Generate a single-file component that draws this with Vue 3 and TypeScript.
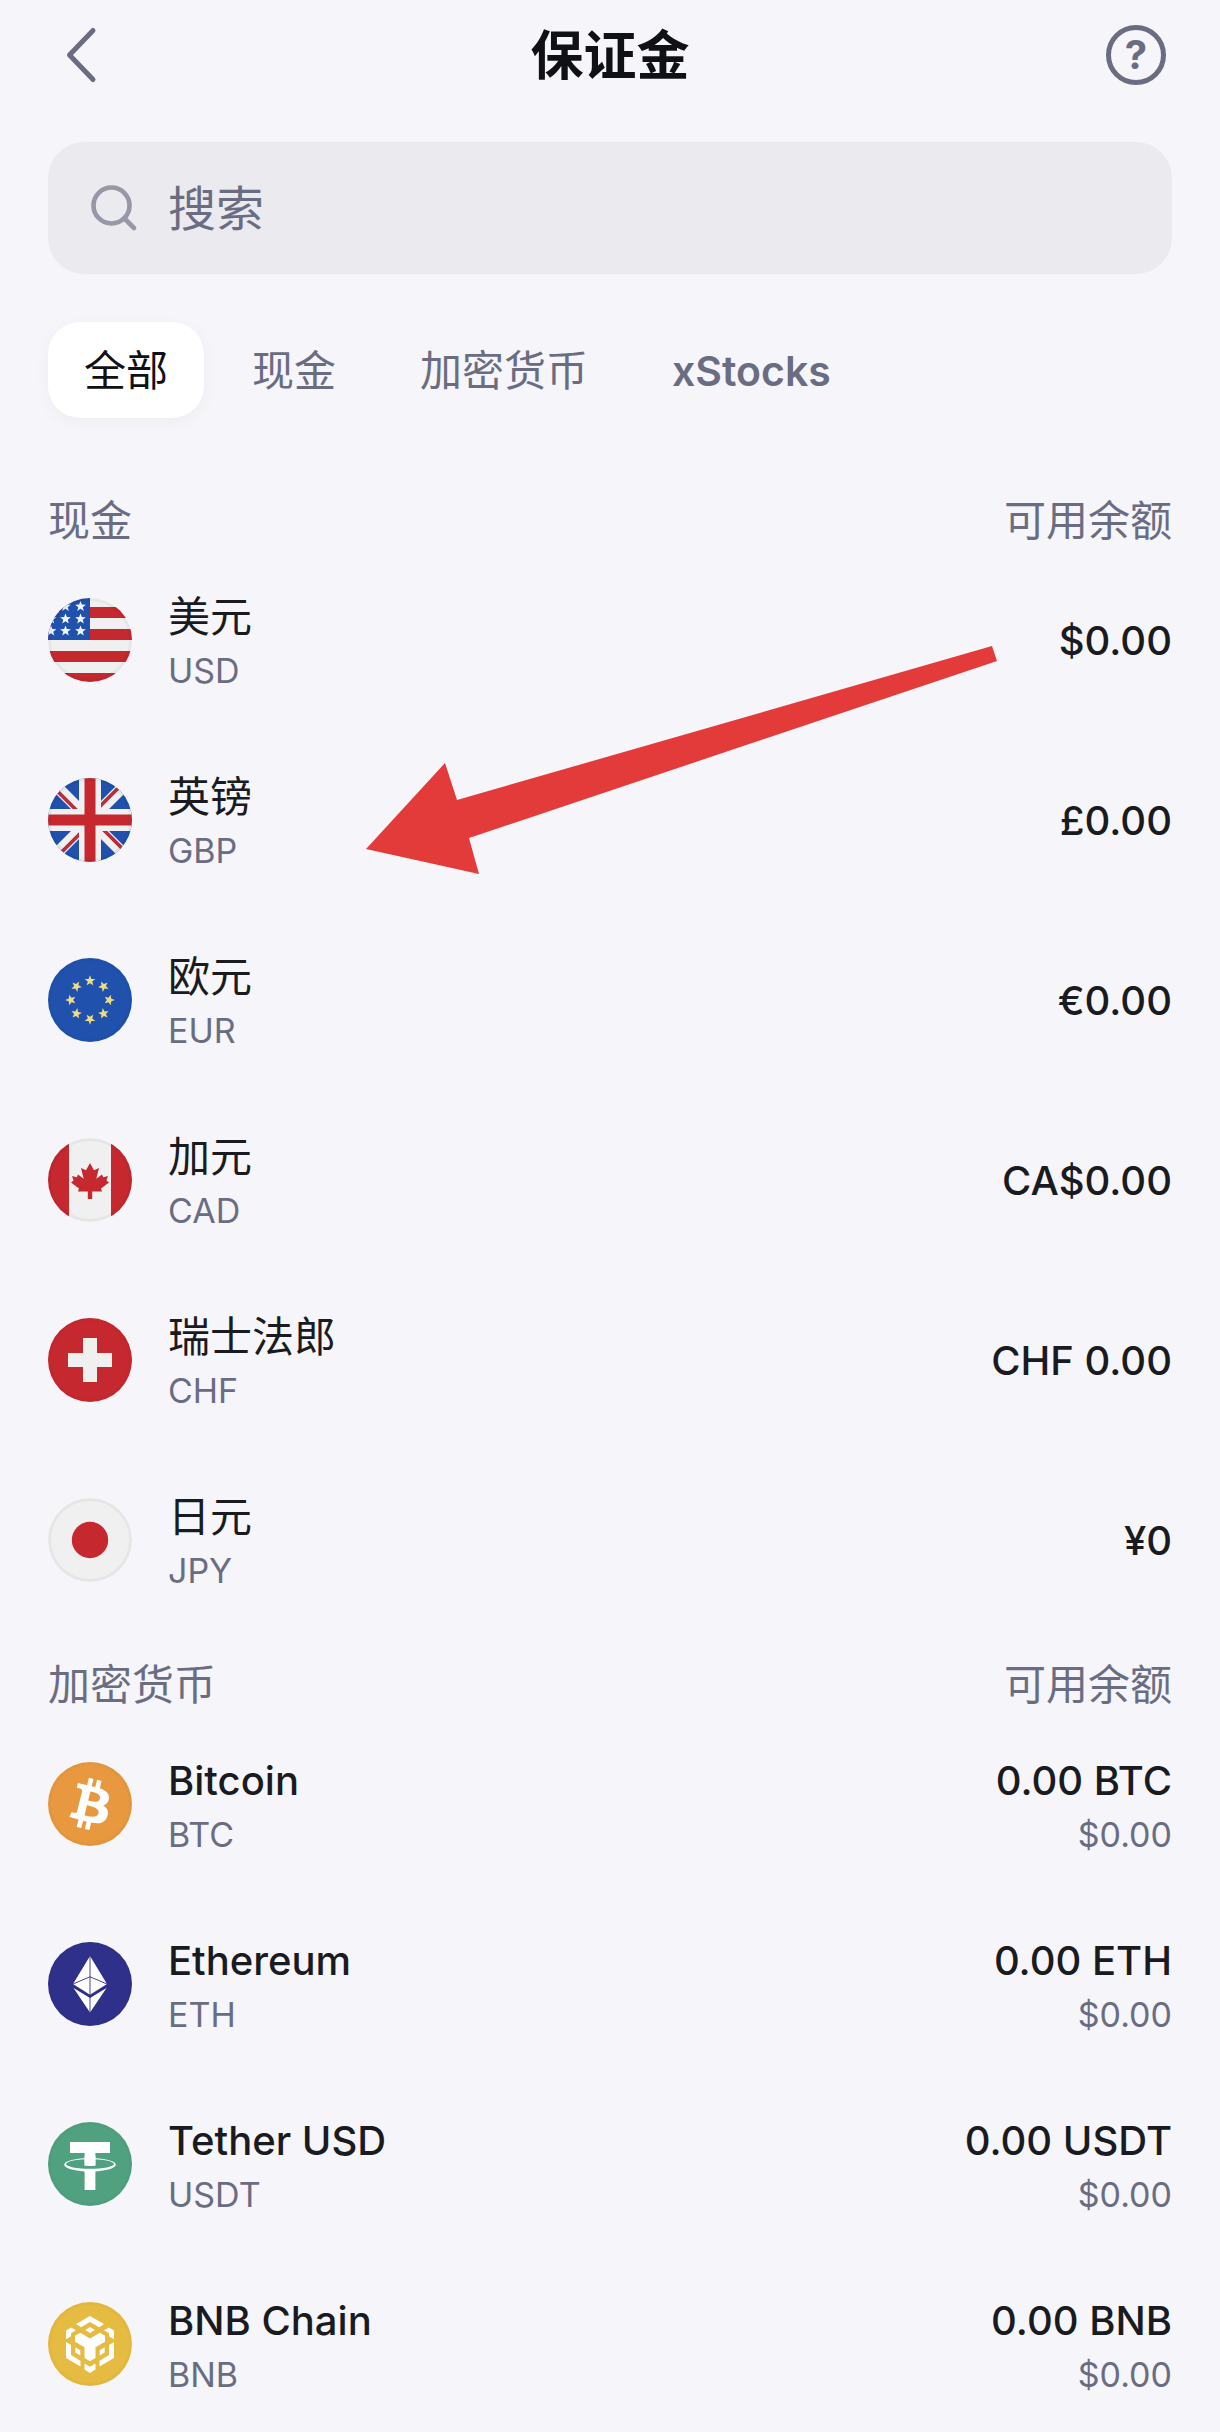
<script setup lang="ts">
import { ref, computed } from 'vue'

interface Asset {
  code: string
  name: string
  amount: string
  value?: string
}

interface Group {
  id: string
  title: string
  assets: Asset[]
}

const tabs = [
  { id: 'all', label: '全部' },
  { id: 'cash', label: '现金' },
  { id: 'crypto', label: '加密货币' },
  { id: 'xstocks', label: 'xStocks' },
]

const activeTab = ref('all')
const query = ref('')

const groups: Group[] = [
  {
    id: 'cash',
    title: '现金',
    assets: [
      { code: 'USD', name: '美元', amount: '$0.00' },
      { code: 'GBP', name: '英镑', amount: '£0.00' },
      { code: 'EUR', name: '欧元', amount: '€0.00' },
      { code: 'CAD', name: '加元', amount: 'CA$0.00' },
      { code: 'CHF', name: '瑞士法郎', amount: 'CHF 0.00' },
      { code: 'JPY', name: '日元', amount: '¥0' },
    ],
  },
  {
    id: 'crypto',
    title: '加密货币',
    assets: [
      { code: 'BTC', name: 'Bitcoin', amount: '0.00 BTC', value: '$0.00' },
      { code: 'ETH', name: 'Ethereum', amount: '0.00 ETH', value: '$0.00' },
      { code: 'USDT', name: 'Tether USD', amount: '0.00 USDT', value: '$0.00' },
      { code: 'BNB', name: 'BNB Chain', amount: '0.00 BNB', value: '$0.00' },
    ],
  },
]

const visibleGroups = computed(() => {
  const q = query.value.trim().toLowerCase()
  return groups
    .filter((g) => activeTab.value === 'all' || g.id === activeTab.value)
    .map((g) => ({
      ...g,
      assets: g.assets.filter((a) => (a.name + a.code).toLowerCase().includes(q)),
    }))
})

function starPoints(cx: number, cy: number, r: number): string {
  const points: string[] = []
  for (let i = 0; i < 10; i++) {
    const radius = i % 2 === 0 ? r : r * 0.42
    const a = (Math.PI / 5) * i - Math.PI / 2
    points.push(`${(cx + radius * Math.cos(a)).toFixed(2)},${(cy + radius * Math.sin(a)).toFixed(2)}`)
  }
  return points.join(' ')
}

const usStars = [8.5, 21, 33].flatMap((y) => [3, 17.5, 32.5].map((x) => starPoints(x, y, 5.6)))
const euStar = starPoints(42, 22.8, 5.6)
const euAngles = [0, 45, 90, 135, 180, 225, 270, 315]
const lightEdge = ['USD', 'GBP', 'CAD', 'JPY']
</script>

<template>
  <div class="page">
    <header class="topbar">
      <button class="back" type="button" aria-label="返回">
        <svg width="36" height="60" viewBox="0 0 36 60" aria-hidden="true">
          <path d="M31 5.500 7.500 30 31 54.500" fill="none" stroke="currentColor" stroke-width="5" stroke-linecap="round" stroke-linejoin="round" />
        </svg>
      </button>
      <h1>保证金</h1>
      <button class="help" type="button" aria-label="帮助">?</button>
    </header>

    <label class="search">
      <svg width="48" height="48" viewBox="0 0 48 48" aria-hidden="true">
        <g fill="none" stroke="currentColor" stroke-width="4.600" stroke-linecap="round">
          <circle cx="21.500" cy="21.500" r="18" />
          <path d="M34.500 34.500 44 44" />
        </g>
      </svg>
      <input v-model="query" type="text" placeholder="搜索" aria-label="搜索" />
    </label>

    <nav class="tabs">
      <button
        v-for="tab in tabs"
        :key="tab.id"
        type="button"
        class="tab"
        :class="{ active: tab.id === activeTab, latin: tab.id === 'xstocks' }"
        @click="activeTab = tab.id"
      >
        {{ tab.label }}
      </button>
    </nav>

    <main>
      <section v-for="group in visibleGroups" :key="group.id" class="group" :class="group.id">
        <div class="group-head">
          <h2>{{ group.title }}</h2>
          <span>可用余额</span>
        </div>
        <ul>
          <li v-for="asset in group.assets" :key="asset.code" class="row">
            <svg class="icon" viewBox="0 0 84 84" aria-hidden="true">
              <template v-if="asset.code === 'USD'">
                <rect width="84" height="84" fill="#f0f0f0" />
                <path d="M0 9h84v11H0zM0 31h84v11H0zM0 53h84v11H0zM0 75h84v9H0z" fill="#c6282f" />
                <rect width="42" height="42" fill="#1f51ad" />
                <polygon v-for="(s, i) in usStars" :key="i" :points="s" fill="#f0f4fb" />
              </template>

              <template v-else-if="asset.code === 'GBP'">
                <rect width="84" height="84" fill="#1f51ad" />
                <path d="M0 0 84 84M84 0 0 84" stroke="#f0f0f0" stroke-width="11.400" />
                <path d="M5 8.700 36 39.700M79 75.300 48 44.300M75.300 5 44.300 36M8.700 79 39.700 48" stroke="#b52f3d" stroke-width="3.600" />
                <path d="M31 0h22v31h31v22H53v31H31V53H0V31h31z" fill="#f0f0f0" />
                <path d="M36.500 0h11v36.500H84v11H47.500V84h-11V47.500H0v-11h36.500z" fill="#c6282f" />
              </template>

              <template v-else-if="asset.code === 'EUR'">
                <rect width="84" height="84" fill="#1f51ad" />
                <polygon v-for="a in euAngles" :key="a" :points="euStar" :transform="`rotate(${a} 42 42)`" fill="#efdc80" />
              </template>

              <template v-else-if="asset.code === 'CAD'">
                <rect width="84" height="84" fill="#f0f0f0" />
                <path d="M0 0h21v84H0zM63 0h21v84H63z" fill="#c6282f" />
                <path d="M42 25 46 32.200 51 30 48.300 40.800 54 36.500 55.300 39.300 60 38 58.500 42.500 61 44.500 53 50.500 54 53.500H44.200V61H39.800V53.500H30L31 50.500 23 44.500 25.500 42.500 24 38 28.700 39.300 30 36.500 35.700 40.800 33 30 38 32.200Z" fill="#c6282f" />
              </template>

              <template v-else-if="asset.code === 'CHF'">
                <rect width="84" height="84" fill="#c6282f" />
                <path d="M35 20h14v15h15v14H49v15H35V49H20V35h15z" fill="#f0f0f0" />
              </template>

              <template v-else-if="asset.code === 'JPY'">
                <rect width="84" height="84" fill="#f0f0f0" />
                <circle cx="42" cy="42" r="18.200" fill="#c6282f" />
              </template>

              <template v-else-if="asset.code === 'BTC'">
                <rect width="84" height="84" fill="#e8983e" />
                <path
                  transform="scale(2.625)"
                  fill="#fff"
                  d="M23.189 14.020c.314-2.096-1.283-3.223-3.465-3.975l.708-2.840-1.728-.430-.690 2.765c-.454-.114-.920-.220-1.385-.326l.695-2.783L15.596 6l-.708 2.839c-.376-.086-.746-.170-1.104-.260l.002-.009-2.384-.595-.460 1.846s1.283.294 1.256.312c.700.175.826.638.805 1.006l-.806 3.235c.048.012.110.030.180.057l-.183-.045-1.130 4.532c-.086.212-.303.531-.793.410.018.025-1.256-.313-1.256-.313l-.858 1.978 2.250.561c.418.105.828.215 1.231.318l-.715 2.872 1.727.430.708-2.840c.472.127.930.245 1.378.357l-.706 2.828 1.728.430.715-2.866c2.948.558 5.164.333 6.097-2.333.752-2.146-.037-3.385-1.588-4.192 1.130-.260 1.980-1.003 2.207-2.538zm-3.950 5.538c-.533 2.147-4.148.986-5.320.695l.950-3.805c1.172.293 4.929.872 4.370 3.110zm.535-5.569c-.487 1.953-3.495.960-4.470.717l.860-3.450c.975.243 4.118.696 3.610 2.733z"
                />
              </template>

              <template v-else-if="asset.code === 'ETH'">
                <rect width="84" height="84" fill="#2f3089" />
                <path d="M42 14 59 42 42 52.700 25 42ZM42 56 58.500 46 42 70.500 25.500 46Z" fill="#fff" />
                <path d="M42 14V53M42 55V71M25 42 42 34.800 59 42" fill="none" stroke="#2f3089" stroke-width="0.900" />
              </template>

              <template v-else-if="asset.code === 'USDT'">
                <rect width="84" height="84" fill="#50a17f" />
                <path d="M22 20h40v11H47.400v12.600q-5.400.600-10.800 0V31H22zM36.600 48h10.800v20H36.600z" fill="#fff" />
                <path
                  fill-rule="evenodd"
                  fill="#fff"
                  d="M16.200 42.700a25.800 6.800 0 1 0 51.600 0a25.800 6.800 0 1 0-51.600 0zM18 42a24 4.800 0 1 0 48 0a24 4.800 0 1 0-48 0z"
                />
                <path d="M36.600 34h10.800v9.600q-5.400.600-10.800 0z" fill="#fff" />
              </template>

              <template v-else>
                <rect width="84" height="84" fill="#e6bb41" />
                <g fill="#fff">
                  <path d="M42 14 56 22 51 25.200 42 20 33 25.200 28 22Z" />
                  <path d="M42 25 46.800 28 42 31 37.200 28Z" />
                  <path d="M18 28.500 23 25.500 28 28.300 23 31.300V34.300L18 37.300Z" />
                  <path d="M66 28.500 61 25.500 56 28.300 61 31.300V34.300L66 37.300Z" />
                  <path d="M27 33.700 32.200 30.700 42 36.500 51.800 30.700 57 33.700V39.700L47.500 45.300V56L42 59.300 36.500 56V45.300L27 39.700Z" />
                  <path d="M18 40 23 43V53L32.500 58.700V64.600L18 56Z" />
                  <path d="M66 40 61 43V53L51.500 58.700V64.600L66 56Z" />
                  <path d="M27.300 45.300 32.300 48.300V53.600L27.300 50.600Z" />
                  <path d="M56.700 45.300 51.700 48.300V53.600L56.700 50.600Z" />
                  <path d="M36.500 61.500 42 64.800 47.500 61.500V67.500L42 71 36.500 67.500Z" />
                </g>
              </template>

              <circle
                cx="42"
                cy="42"
                r="40.500"
                fill="none"
                stroke="#000"
                stroke-width="3"
                :stroke-opacity="lightEdge.includes(asset.code) ? 0.04 : 0.02"
              />
            </svg>

            <div class="label">
              <span class="name">{{ asset.name }}</span>
              <span class="sub">{{ asset.code }}</span>
            </div>
            <div class="balance">
              <span class="amount">{{ asset.amount }}</span>
              <span v-if="asset.value" class="sub">{{ asset.value }}</span>
            </div>
          </li>
        </ul>
        <svg v-if="group.id === 'cash'" class="pointer" width="632" height="230" viewBox="0 0 632 230" aria-hidden="true">
          <path d="M0 203 79 117 91 154 626 0 631 15 103 192 113 228Z" fill="#e23b39" />
        </svg>
      </section>
    </main>
  </div>
</template>

<style>
body {
  background: #f5f5fa;
}
</style>

<style scoped>
.page {
  box-sizing: border-box;
  padding: 0 48px;
  background: #f5f5fa;
  color: #1a1b20;
  font-family: Inter, "Noto Sans CJK SC", sans-serif;
  font-size: 40px;
}

button {
  margin: 0;
  padding: 0;
  border: 0;
  background: none;
  color: inherit;
  font: inherit;
  cursor: pointer;
}

.topbar {
  display: flex;
  align-items: center;
  justify-content: space-between;
  height: 110px;
  padding: 0 6px 0 14px;
}

.back,
.help {
  display: flex;
  align-items: center;
  height: 60px;
  color: #6a6d82;
}

.back {
  width: 52px;
}

.help {
  box-sizing: border-box;
  justify-content: center;
  width: 60px;
  border: 5px solid #6a6d82;
  border-radius: 50%;
  font-size: 40px;
  font-weight: 700;
  line-height: 50px;
}

h1 {
  margin: 0;
  padding-top: 2px;
  color: #101114;
  font-size: 53px;
  font-weight: 700;
  line-height: 72px;
}

.search {
  display: flex;
  align-items: center;
  gap: 30px;
  height: 132px;
  margin-top: 32px;
  padding: 0 42px;
  border-radius: 36px;
  background: #ebeaee;
  color: #9798a6;
}

.search svg {
  flex: none;
}

.search input {
  flex: 1;
  min-width: 0;
  height: 72px;
  padding: 0;
  border: 0;
  outline: 0;
  background: none;
  color: #101114;
  font: inherit;
  font-size: 48px;
}

.search input::placeholder {
  color: #6a6d82;
  opacity: 1;
}

.tabs {
  display: flex;
  gap: 12px;
  margin-top: 48px;
}

.tab {
  height: 96px;
  padding: 2px 36px 0;
  border-radius: 32px;
  color: #6a6d82;
  font-size: 42px;
  line-height: 60px;
  white-space: nowrap;
}

.tab.active {
  background: #fff;
  box-shadow: 0 4px 16px rgba(16, 17, 20, 0.04);
  color: #101114;
}

.tab.latin {
  font-size: 41px;
  font-weight: 600;
}

main {
  margin-top: 72px;
}

.group {
  position: relative;
}

.group + .group {
  margin-top: 24px;
}

.group-head {
  display: flex;
  justify-content: space-between;
  height: 60px;
  color: #6a6d82;
  font-size: 42px;
  line-height: 62px;
}

h2 {
  margin: 0;
  font: inherit;
}

ul {
  margin: 0;
  padding: 0;
  list-style: none;
}

.row {
  display: flex;
  align-items: center;
  gap: 36px;
  padding: 35px 0;
}

.group.crypto .row:last-child {
  padding-bottom: 24px;
}

.icon {
  flex: none;
  width: 84px;
  height: 84px;
  border-radius: 50%;
}

.label,
.balance {
  display: flex;
  flex-direction: column;
  padding-top: 2px;
}

.label {
  flex: 1;
  min-width: 0;
}

.balance {
  align-items: flex-end;
}

.name,
.amount {
  font-weight: 500;
  line-height: 60px;
  white-space: nowrap;
}

.cash .name {
  font-size: 42px;
  font-weight: 400;
}

.sub {
  color: #6a6d82;
  font-size: 34px;
  line-height: 48px;
}

/* Arrow drawn over the list, pointing at the GBP row */
.pointer {
  position: absolute;
  top: 156px;
  left: 318px;
  pointer-events: none;
}
</style>
